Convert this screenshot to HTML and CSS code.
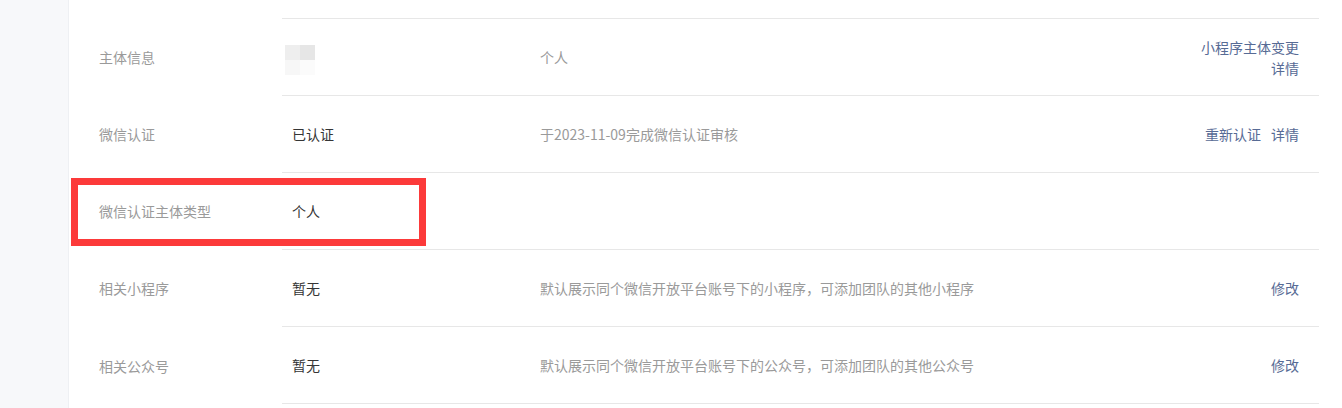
FILE: index.html
```html
<!DOCTYPE html>
<html lang="zh-CN">
  <head>
    <meta charset="UTF-8" />
    <title>基本设置</title>
    <link rel="stylesheet" href="styles.css">
  </head>
  <body>
    <div class="page">
      <!-- 左侧菜单栏（截图中只露出一部分） -->
      <div class="side"></div>

      <div class="main">
        <div class="top-gap"></div>

        <div class="row">
          <div class="label">主体信息</div>
          <div class="row-body">
            <div class="value">
              <div class="blur">
                <span class="b1"></span><span class="b2"></span>
                <span class="b3"></span><span class="b4"></span>
              </div>
            </div>
            <div class="desc">个人</div>
            <div class="actions stack">
              <a href="#">小程序主体变更</a>
              <a href="#">详情</a>
            </div>
          </div>
        </div>

        <div class="row">
          <div class="label">微信认证</div>
          <div class="row-body">
            <div class="value">已认证</div>
            <div class="desc">于2023-11-09完成微信认证审核</div>
            <div class="actions">
              <a href="#">重新认证</a>
              <a href="#">详情</a>
            </div>
          </div>
        </div>

        <div class="row">
          <div class="label">微信认证主体类型</div>
          <div class="row-body">
            <div class="value">个人</div>
            <div class="desc"></div>
            <div class="actions"></div>
          </div>
        </div>

        <div class="row">
          <div class="label">相关小程序</div>
          <div class="row-body">
            <div class="value">暂无</div>
            <div class="desc">默认展示同个微信开放平台账号下的小程序，可添加团队的其他小程序</div>
            <div class="actions"><a href="#">修改</a></div>
          </div>
        </div>

        <div class="row last">
          <div class="label">相关公众号</div>
          <div class="row-body">
            <div class="value">暂无</div>
            <div class="desc">默认展示同个微信开放平台账号下的公众号，可添加团队的其他公众号</div>
            <div class="actions"><a href="#">修改</a></div>
          </div>
        </div>
      </div>

      <!-- 截图标注的红框 -->
      <div class="mark"></div>
    </div>
  </body>
</html>
```

FILE: styles.css
```css
body {
  margin: 0;
  font-family: "Noto Sans CJK SC", "Liberation Sans", sans-serif;
  font-size: 14px;
  background-color: #fff;
}

.page {
  position: relative;
  display: flex;
  height: 408px;
  overflow: hidden;
}

.side {
  width: 68px;
  flex-shrink: 0;
  background-color: #f7f8fa;
  border-right: 1px solid #eef0f3;
}

.main {
  flex: 1;
  background-color: #fff;
}

.top-gap {
  height: 18px;
}

.row {
  display: flex;
  align-items: stretch;
}

.label {
  width: 183px;
  padding-left: 30px;
  color: #9a9a9a;
  display: flex;
  align-items: center;
  padding-top: 1px;
}

.row-body {
  flex: 1;
  margin-right: 23px;
  height: 76px;
  border-top: 1px solid #e7e7e7;
  display: grid;
  grid-template-columns: 258px 1fr auto;
  align-items: center;
}

.row.last .row-body {
  border-bottom: 1px solid #e7e7e7;
}

.value {
  padding-left: 10px;
  color: #353535;
}

.desc {
  color: #9a9a9a;
}

.actions {
  padding-right: 20px;
  display: flex;
  gap: 10px;
  justify-content: flex-end;
}

.actions.stack {
  flex-direction: column;
  align-items: flex-end;
  gap: 0;
  line-height: 21px;
  padding-top: 1px;
}

.actions a {
  color: #576b95;
  text-decoration: none;
}

/* 打码的头像 */
.blur {
  width: 30px;
  height: 30px;
  margin-left: -7px;
  margin-top: 6px;
  display: grid;
  grid-template-columns: 15px 15px;
}

.blur .b1 { background-color: #eeeeee; }
.blur .b2 { background-color: #e6e6e6; }
.blur .b3 { background-color: #f7f7f7; }
.blur .b4 { background-color: #fbfbfb; }

.mark {
  position: absolute;
  left: 71px;
  top: 178px;
  width: 355px;
  height: 68px;
  box-sizing: border-box;
  border: 7px solid #fc3a3a;
}
```
